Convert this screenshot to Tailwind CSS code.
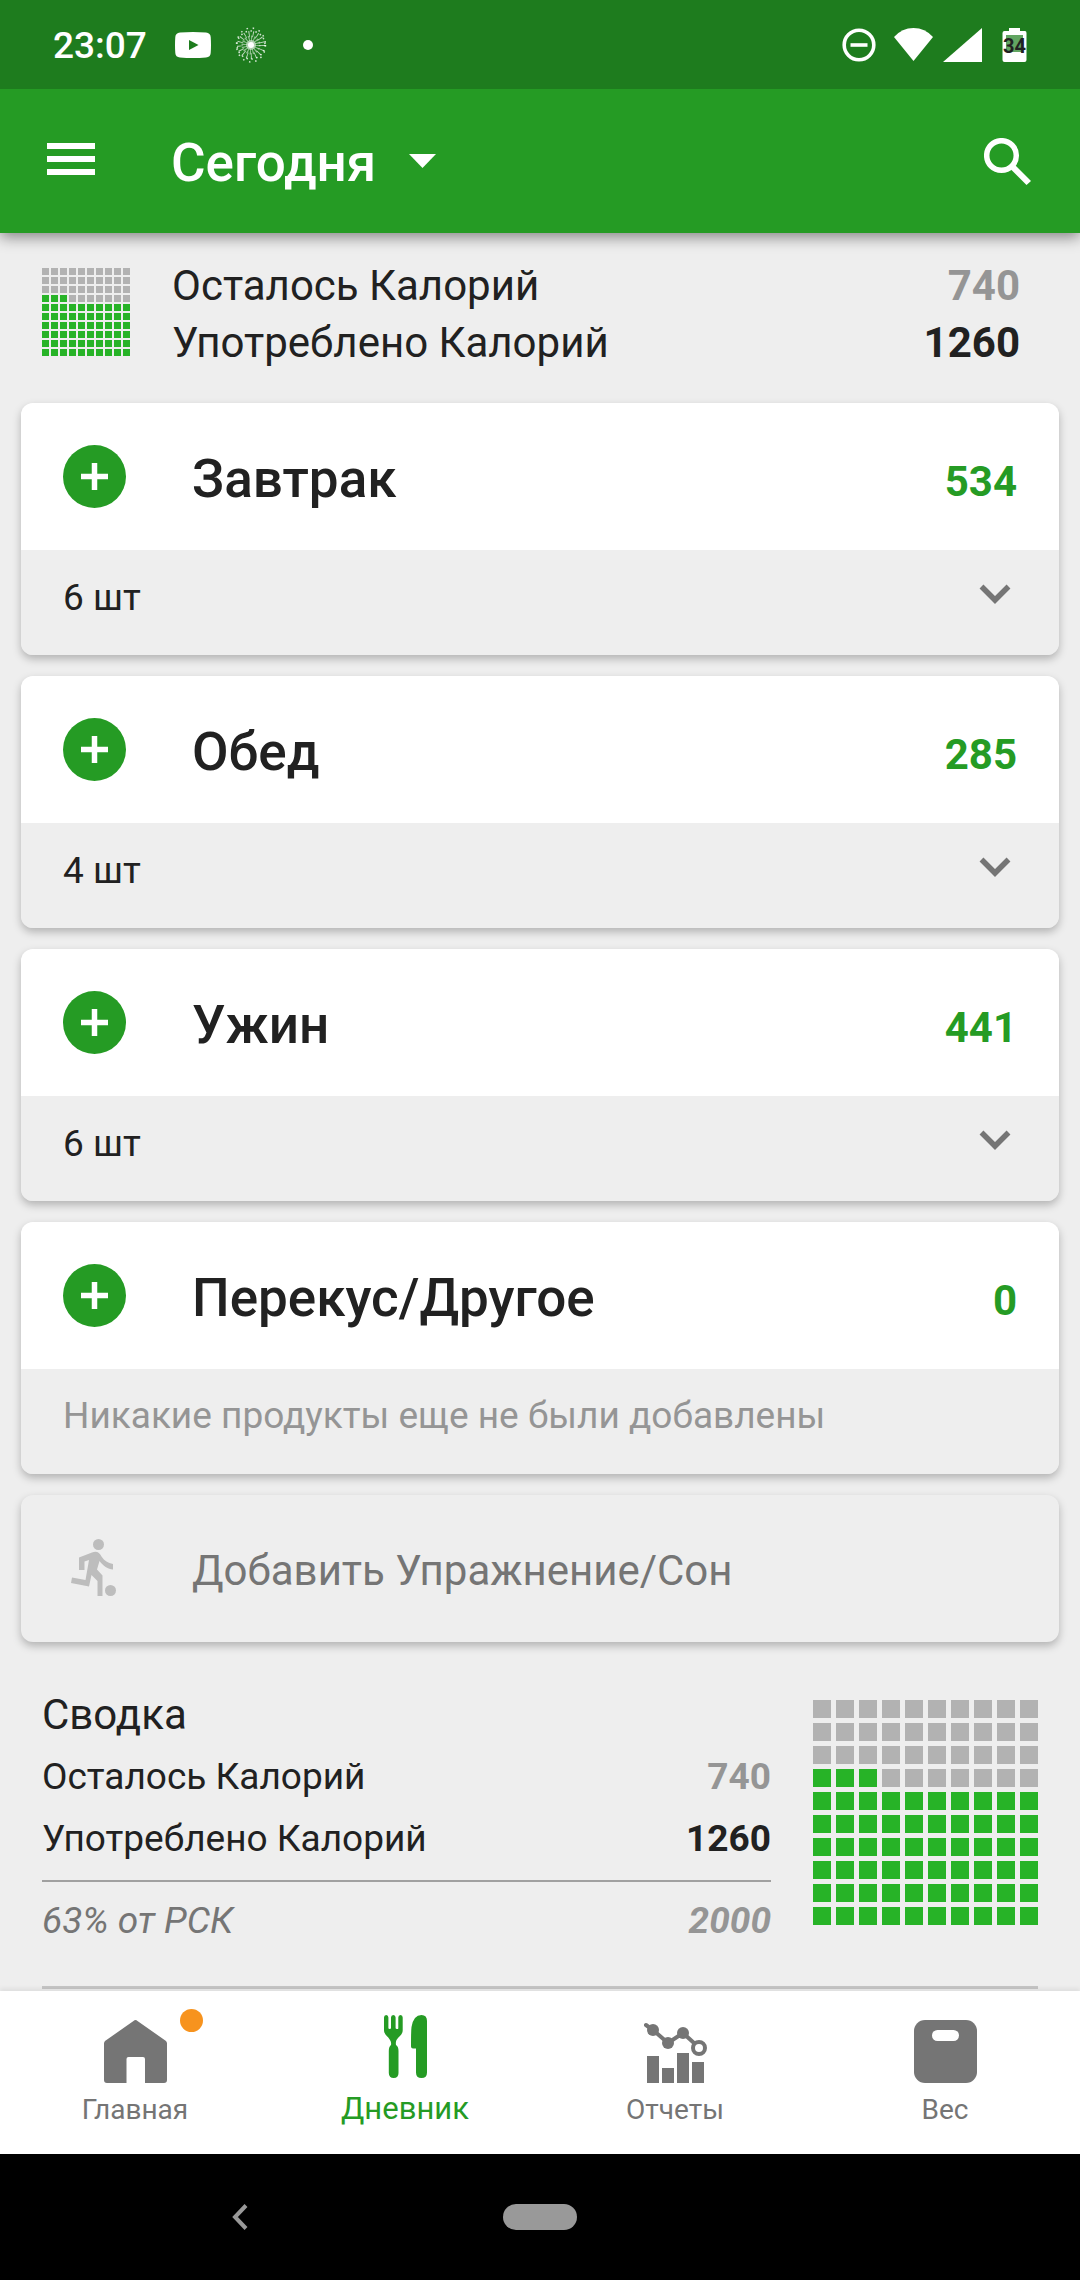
<!DOCTYPE html>
<html lang="ru">
<head>
<meta charset="utf-8">
<meta name="viewport" content="width=device-width, initial-scale=1">
<title>Дневник питания</title>
<script src="https://cdn.jsdelivr.net/npm/@tailwindcss/browser@4"></script>
</head>
<body class="flex min-h-screen flex-col bg-[#eeeeee] font-['Roboto',sans-serif] text-[#212121]">

<!-- Shared symbols -->
<svg width="0" height="0" class="absolute" aria-hidden="true">
  <defs>
    <symbol id="plus" viewBox="0 0 63 63">
      <circle cx="31.500" cy="31.500" r="31.500" fill="#259b24"/>
      <path d="M18 31.500H45M31.500 18V45" stroke="#fff" stroke-width="5.500"/>
    </symbol>
    <symbol id="chevron" viewBox="0 0 32 20">
      <path d="M2.500 2.500L16 16L29.500 2.500" fill="none" stroke="#757575" stroke-width="5.500"/>
    </symbol>
    <pattern id="grey-s" width="9" height="9" patternUnits="userSpaceOnUse"><rect width="7" height="7" fill="#b2b2b2"/></pattern>
    <pattern id="green-s" width="9" height="9" patternUnits="userSpaceOnUse"><rect width="7" height="7" fill="#27b327"/></pattern>
    <pattern id="grey-l" width="23" height="23" patternUnits="userSpaceOnUse"><rect width="18" height="18" fill="#b2b2b2"/></pattern>
    <pattern id="green-l" width="23" height="23" patternUnits="userSpaceOnUse"><rect width="18" height="18" fill="#27b327"/></pattern>
  </defs>
</svg>

<!-- System status bar -->
<div class="relative z-20 flex h-[89px] shrink-0 items-center bg-[#1e7c1e] pr-[53px] pl-[53px] text-white">
  <time class="pt-[3px] text-[37px] leading-[44px] font-medium">23:07</time>
  <svg class="ml-7 h-[26px] w-9" viewBox="0 0 36 26" aria-hidden="true"><path fill="#fff" fill-rule="evenodd" d="M5 .5Q18-.5 31 .5Q35.500 1 35.700 5Q36.300 13 35.700 21Q35.500 25 31 25.500Q18 26.500 5 25.500Q.5 25 .3 21Q-.3 13 .3 5Q.5 1 5 .5ZM14 8V18L23.500 13Z"/></svg>
  <svg class="ml-6 h-9 w-8" viewBox="-16 -18 32 36" aria-hidden="true">
    <g stroke="#fff" fill="none">
      <circle r="6" stroke-width="7" stroke-dasharray="1 1.300" opacity=".5"/>
      <circle r="11" stroke-width="6" stroke-dasharray=".9 3.200" opacity=".7"/>
      <circle r="14" stroke-width="1.500" stroke-dasharray="1.500 3.500" opacity=".8"/>
      <ellipse rx="14.500" ry="17" stroke-width="1.500" stroke-dasharray="1.500 4.800" opacity=".8"/>
    </g>
    <circle r="5" fill="#fff" opacity=".55"/><circle r="3" fill="#fff"/>
  </svg>
  <span class="ml-9 size-[10px] rounded-full bg-white"></span>
  <svg class="ml-auto h-[34px] w-[34px]" viewBox="0 0 34 34" aria-hidden="true"><circle cx="17" cy="17" r="14.800" fill="none" stroke="#fff" stroke-width="3.600"/><path d="M8.500 17H25.500" stroke="#fff" stroke-width="3.600"/></svg>
  <svg class="ml-[18px] h-[34px] w-[39px]" viewBox="0 0 39 34" aria-hidden="true"><path fill="#fff" d="M0 9Q8 0 19.500 0T39 9L19.500 33Z"/></svg>
  <svg class="ml-[10px] h-[34px] w-[39px]" viewBox="0 0 39 34" aria-hidden="true"><path fill="#fff" d="M0 34L39 0V34Z"/></svg>
  <div class="relative ml-5 h-[34px] w-[25px]">
    <svg class="h-[34px] w-[25px]" viewBox="0 0 25 34" aria-hidden="true"><path fill="#fff" d="M7 0H18V3H23Q24.500 3 24.500 5V32Q24.500 34 22.500 34H2.500Q.5 34 .5 32V5Q.5 3 2.500 3H7Z"/><path fill="#62a562" d="M4 7H21V24H4Z"/></svg>
    <span class="absolute inset-x-0 top-[7px] text-center text-[20px] leading-[22px] font-bold text-[#212121]">34</span>
  </div>
</div>

<!-- App bar -->
<header class="relative z-10 flex h-36 shrink-0 items-center bg-[#259b24] pr-[49px] pl-[47px] text-white shadow-[0_4px_14px_rgba(0,0,0,0.45)]">
  <button type="button" aria-label="Меню" class="mr-[76px] pb-1">
    <svg class="h-8 w-12" viewBox="0 0 48 32"><path d="M0 3H48M0 16H48M0 29H48" stroke="#fff" stroke-width="6"/></svg>
  </button>
  <button type="button" class="flex items-center gap-[33px]">
    <span class="pt-[3px] text-[53px] leading-[62px] font-medium">Сегодня</span>
    <svg class="h-[14px] w-[27px]" viewBox="0 0 27 14" aria-hidden="true"><path fill="#fff" d="M0 0H27L13.500 14Z"/></svg>
  </button>
  <button type="button" aria-label="Поиск" class="ml-auto">
    <svg class="h-[47px] w-[47px]" viewBox="0 0 47 47"><circle cx="17.500" cy="17.500" r="14.800" fill="none" stroke="#fff" stroke-width="5.500"/><path d="M27 27H31L47 43L42.500 47L27.500 32Z" fill="#fff"/></svg>
  </button>
</header>

<main class="flex-1">
  <!-- Calories at a glance -->
  <section class="flex pt-6 pr-[60px] pb-8 pl-[42px]">
    <svg class="mt-[11px] mr-[42px] h-[88px] w-[88px] shrink-0" viewBox="0 0 88 88" shape-rendering="crispEdges" role="img" aria-label="63% от РСК">
      <rect width="88" height="88" fill="url(#grey-s)"/>
      <path fill="#eeeeee" d="M0 27H25V34H0ZM0 36H88V88H0Z"/>
      <path fill="url(#green-s)" d="M0 27H25V34H0ZM0 36H88V88H0Z"/>
    </svg>
    <dl class="flex-1 text-[42px] leading-[57px]">
      <div class="flex justify-between"><dt>Осталось Калорий</dt><dd class="font-bold text-[#959595]">740</dd></div>
      <div class="flex justify-between"><dt>Употреблено Калорий</dt><dd class="font-bold">1260</dd></div>
    </dl>
  </section>

  <!-- Meals -->
  <div class="flex flex-col gap-[21px] px-[21px]">
    <section class="overflow-hidden rounded-xl shadow-[0_4px_8px_rgba(0,0,0,0.25)]">
      <div class="flex h-[147px] items-center bg-white px-[42px]">
        <button type="button" aria-label="Добавить в Завтрак" class="mr-[66px]"><svg class="size-[63px]"><use href="#plus"/></svg></button>
        <h2 class="flex-1 pt-[5px] text-[53px] leading-[62px] font-medium">Завтрак</h2>
        <span class="pt-[11px] text-[42px] leading-[50px] font-bold text-[#259b24]">534</span>
      </div>
      <button type="button" class="flex h-[105px] w-full justify-between bg-[#eeeeee] pr-12 pl-[42px]">
        <span class="pt-[26px] text-[37px] leading-[44px]">6 шт</span>
        <svg class="mt-[34px] h-5 w-8" aria-hidden="true"><use href="#chevron"/></svg>
      </button>
    </section>

    <section class="overflow-hidden rounded-xl shadow-[0_4px_8px_rgba(0,0,0,0.25)]">
      <div class="flex h-[147px] items-center bg-white px-[42px]">
        <button type="button" aria-label="Добавить в Обед" class="mr-[66px]"><svg class="size-[63px]"><use href="#plus"/></svg></button>
        <h2 class="flex-1 pt-[5px] text-[53px] leading-[62px] font-medium">Обед</h2>
        <span class="pt-[11px] text-[42px] leading-[50px] font-bold text-[#259b24]">285</span>
      </div>
      <button type="button" class="flex h-[105px] w-full justify-between bg-[#eeeeee] pr-12 pl-[42px]">
        <span class="pt-[26px] text-[37px] leading-[44px]">4 шт</span>
        <svg class="mt-[34px] h-5 w-8" aria-hidden="true"><use href="#chevron"/></svg>
      </button>
    </section>

    <section class="overflow-hidden rounded-xl shadow-[0_4px_8px_rgba(0,0,0,0.25)]">
      <div class="flex h-[147px] items-center bg-white px-[42px]">
        <button type="button" aria-label="Добавить в Ужин" class="mr-[66px]"><svg class="size-[63px]"><use href="#plus"/></svg></button>
        <h2 class="flex-1 pt-[5px] text-[53px] leading-[62px] font-medium">Ужин</h2>
        <span class="pt-[11px] text-[42px] leading-[50px] font-bold text-[#259b24]">441</span>
      </div>
      <button type="button" class="flex h-[105px] w-full justify-between bg-[#eeeeee] pr-12 pl-[42px]">
        <span class="pt-[26px] text-[37px] leading-[44px]">6 шт</span>
        <svg class="mt-[34px] h-5 w-8" aria-hidden="true"><use href="#chevron"/></svg>
      </button>
    </section>

    <section class="overflow-hidden rounded-xl shadow-[0_4px_8px_rgba(0,0,0,0.25)]">
      <div class="flex h-[147px] items-center bg-white px-[42px]">
        <button type="button" aria-label="Добавить в Перекус/Другое" class="mr-[66px]"><svg class="size-[63px]"><use href="#plus"/></svg></button>
        <h2 class="flex-1 pt-[5px] text-[53px] leading-[62px] font-medium">Перекус/Другое</h2>
        <span class="pt-[11px] text-[42px] leading-[50px] font-bold text-[#259b24]">0</span>
      </div>
      <p class="h-[105px] bg-[#eeeeee] px-[42px] pt-[25px] text-[37px] leading-[44px] text-[#959595]">Никакие продукты еще не были добавлены</p>
    </section>

    <button type="button" class="flex h-[147px] items-center rounded-xl bg-[#eeeeee] px-[42px] shadow-[0_4px_8px_rgba(0,0,0,0.25)]">
      <svg class="mr-[66px] size-[63px]" viewBox="0 0 63 63" fill="#bdbdbd" aria-hidden="true">
        <circle cx="35.500" cy="7.500" r="5.500"/><circle cx="47.500" cy="53.500" r="5.500"/>
        <path d="M29 15.500L16 20.500V33H21.500V24.500L26 23L22.500 43L9 40.500L8 46L26 49.500L28.500 38L34.500 44V59H39.500V38.500L34 32.500L36.500 24C40 29 45 32 50 32.500V27C45 26 41.500 24 38.500 19.500C36.500 15.500 33.500 13.500 29 15.500Z"/>
      </svg>
      <span class="pt-1 text-[42px] leading-[50px] text-[#757575]">Добавить Упражнение/Сон</span>
    </button>
  </div>

  <!-- Daily summary -->
  <section class="mx-[42px] mt-11 border-b-[3px] border-[#c6c6c6] pb-[34px]">
    <div class="flex gap-[42px]">
      <div class="flex-1">
        <h2 class="text-[42px] leading-[57px]">Сводка</h2>
        <dl class="mt-[3px] text-[37px] leading-[62px]">
          <div class="flex justify-between"><dt>Осталось Калорий</dt><dd class="font-bold text-[#959595]">740</dd></div>
          <div class="flex justify-between"><dt>Употреблено Калорий</dt><dd class="font-bold">1260</dd></div>
          <div class="mt-[10px] flex justify-between border-t-2 border-[#a0a0a0] pt-2 italic"><dt class="text-[#757575]">63% от РСК</dt><dd class="font-bold text-[#959595]">2000</dd></div>
        </dl>
      </div>
      <svg class="mt-[14px] h-[225px] w-[225px] shrink-0" viewBox="0 0 225 225" shape-rendering="crispEdges" role="img" aria-label="63% от РСК">
        <rect width="225" height="225" fill="url(#grey-l)"/>
        <path fill="#eeeeee" d="M0 69H64V87H0ZM0 92H225V225H0Z"/>
        <path fill="url(#green-l)" d="M0 69H64V87H0ZM0 92H225V225H0Z"/>
      </svg>
    </div>
  </section>
</main>

<!-- Bottom navigation -->
<nav class="mt-[2px] grid h-[163px] shrink-0 grid-cols-4 bg-white text-[28px] leading-[34px] text-[#757575] shadow-[0_-3px_4px_rgba(0,0,0,0.06)]">
  <a href="#home" class="flex flex-col items-center pt-[29px]">
    <span class="relative">
      <svg class="h-[63px] w-[63px]" viewBox="0 0 63 63" aria-hidden="true"><path fill="#757575" d="M29.500 1Q31.500-.8 33.500 1L62 21Q63 22 63 23.500V60Q63 63 60 63H41V39Q41 37 39 37H24.500Q22.500 37 22.500 39V63H3Q0 63 0 60V23.500Q0 22 1 21Z"/></svg>
      <span class="absolute -top-[11px] -right-9 size-[23px] rounded-full bg-[#f7931e]"></span>
    </span>
    <span class="mt-[10px]">Главная</span>
  </a>
  <a href="#diary" aria-current="page" class="flex flex-col items-center pt-6 text-[#259b24]">
    <svg class="h-[63px] w-[43px]" viewBox="0 0 43 63" fill="#259b24" aria-hidden="true">
      <path d="M0 2.500Q0 0 2.200 0T4.400 2.500V13Q4.400 14 5.700 14T7 13V2.500Q7 0 9.300 0T11.600 2.500V13Q11.600 14 13 14T14.300 13V2.500Q14.300 0 16.500 0T18.700 2.500V15C18.700 20 15 21 12.500 25Q11.500 27 12 30Q14.500 31.500 14.500 36V58Q14.500 63 9.700 63T4.800 58V36Q4.800 31.500 7 30Q7.500 27 6 25C4 21 0 20 0 15Z"/>
      <path d="M27 31.500Q27 16 27.500 12Q29.500 0 37.500 0Q43 0 43 6V57.500Q43 63 37.500 63T32 57.500V33.500H29Q27 33.500 27 31.500Z"/>
    </svg>
    <span class="mt-[12px] text-[31px] leading-[38px]">Дневник</span>
  </a>
  <a href="#reports" class="flex flex-col items-center pt-[29px]">
    <svg class="h-[63px] w-[63px]" viewBox="0 0 63 63" aria-hidden="true"><path fill="none" stroke="#757575" stroke-width="4" stroke-linecap="round" d="M2 5L9 10L24 23L39 13L50 23"/><g fill="#757575"><circle cx="9" cy="10" r="6"/><circle cx="24" cy="23" r="6"/><circle cx="39" cy="13" r="6"/><path d="M3 36H15V63H3ZM18 48H30V63H18ZM33 33H45V63H33ZM48 42H60V63H48Z"/></g><circle cx="55" cy="28" r="6" fill="#fff" stroke="#757575" stroke-width="4"/></svg>
    <span class="mt-[10px]">Отчеты</span>
  </a>
  <a href="#weight" class="flex flex-col items-center pt-[29px]">
    <svg class="h-[63px] w-[63px]" viewBox="0 0 63 63" aria-hidden="true"><rect width="63" height="63" rx="11" fill="#757575"/><rect x="18" y="10" width="27" height="11" rx="5.500" fill="#fff"/></svg>
    <span class="mt-[10px]">Вес</span>
  </a>
</nav>

<!-- System navigation bar -->
<div class="grid h-[126px] shrink-0 grid-cols-9 items-center bg-black">
  <button type="button" aria-label="Назад" class="col-span-4 flex justify-center"><svg class="h-[26px] w-4" viewBox="0 0 16 26"><path d="M14 1.500L3 13L14 24.500" fill="none" stroke="#999" stroke-width="4"/></svg></button>
  <button type="button" aria-label="Домой" class="flex justify-center"><span class="h-[26px] w-[74px] rounded-full bg-[#999999]"></span></button>
</div>
</body>
</html>
